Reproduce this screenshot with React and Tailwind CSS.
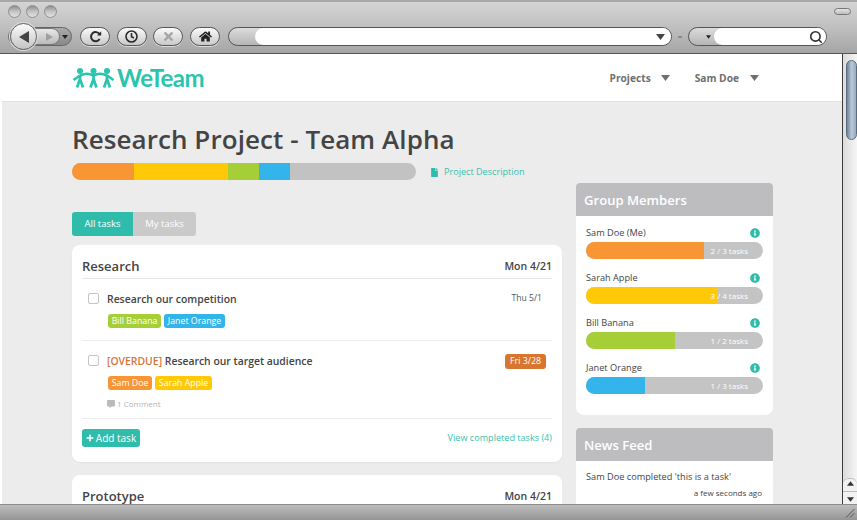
import React from "react";
import { FaHome, FaFile, FaInfoCircle, FaCommentAlt, FaPlus, FaTimes } from "react-icons/fa";
import { Search } from "lucide-react";

const font = { fontFamily: '"Open Sans", sans-serif' };

function Caret({ className }) {
    return (
        <svg width="9" height="6" viewBox="0 0 9 6" className={className}>
            <path d="M0 0h9L4.5 6z" fill="currentColor" />
        </svg>
    );
}

function Light() {
    return <div className="w-[13px] h-[13px] rounded-full border border-[#8f8f8f] bg-gradient-to-b from-[#8e8e92] via-[#c4c4c6] to-[#e2e2e2]" />;
}

function ToolButton({ children }) {
    return (
        <div className="w-[30px] h-[19px] rounded-full border border-[#555] bg-gradient-to-b from-[#fafafa] to-[#c9c9c9] flex items-center justify-center text-[#2b2b2b] shadow-[0_1px_0_#ddd]">
            {children}
        </div>
    );
}

function Toolbar() {
    return (
        <div className="h-[54px] shrink-0 bg-gradient-to-b from-[#d4d4d4] via-[#bfbfbf] to-[#a5a5a5] border-t-2 border-[#a8a8a8] border-b border-b-[#555] relative">
            <div className="flex gap-[5px] pl-[8px] pt-[3px] h-[19px]">
                <Light />
                <Light />
                <Light />
            </div>
            <div className="absolute right-[6px] top-[6px] w-[17px] h-[7px] rounded-full border border-[#777] bg-gradient-to-b from-[#e4e4e4] to-[#bdbdbd]" />
            <div className="flex items-center pl-[8px] pt-[6px]">
                <div className="relative w-[64px] h-[19px] rounded-full border border-[#666] bg-gradient-to-b from-[#aaa] to-[#888] mr-[8px]">
                    <div className="absolute left-[18px] top-0 w-[33px] h-[17px] rounded-full bg-gradient-to-b from-[#e8e8e8] to-[#bbb] border border-[#777] flex items-center justify-end pr-[6px] text-[#a0a0a0]">
                        <svg width="7" height="8" viewBox="0 0 8 9"><path d="M0 0l8 4.5L0 9z" fill="currentColor" /></svg>
                    </div>
                    <div className="absolute left-[1px] top-[-5px] w-[27px] h-[27px] rounded-full border border-[#666] bg-gradient-to-b from-[#fbfbfb] to-[#c4c4c4] shadow-[0_0_0_1px_#ddd] flex items-center justify-center text-[#444]">
                        <svg width="10" height="12" viewBox="0 0 10 12"><path d="M10 0v12L0 6z" fill="currentColor" /></svg>
                    </div>
                    <Caret className="absolute right-[3px] top-[7px] text-[#222] w-[6px] h-[4px]" />
                </div>
                <div className="flex gap-[6.7px] mr-[8px]">
                    <ToolButton>
                        <svg width="13" height="13" viewBox="0 0 13 13" fill="none" stroke="currentColor" strokeWidth="2">
                            <path d="M10.5 4.2A4.6 4.6 0 1 0 10.6 9" />
                            <path d="M12.2 1.2v4.4H8z" fill="currentColor" stroke="none" />
                        </svg>
                    </ToolButton>
                    <ToolButton>
                        <svg width="13" height="13" viewBox="0 0 13 13" fill="none" stroke="currentColor" strokeWidth="1.6">
                            <circle cx="6.5" cy="6.5" r="5.5" />
                            <path d="M6.5 3v3.7l2.4 1.3" />
                        </svg>
                    </ToolButton>
                    <ToolButton>
                        <FaTimes className="text-[#a5a5a5] text-[13px]" />
                    </ToolButton>
                    <ToolButton>
                        <FaHome className="text-[13px] text-[#222]" />
                    </ToolButton>
                </div>
                <div className="w-[444px] h-[19px] rounded-full border border-[#555] bg-gradient-to-b from-[#dcdcdc] to-[#b5b5b5] flex overflow-hidden">
                    <div className="w-[26px] shrink-0" />
                    <div className="flex-1 bg-white rounded-l-full flex items-center justify-end">
                        <Caret className="text-[#444] mr-[6px]" />
                    </div>
                </div>
                <div className="w-[4px] h-[2px] bg-[#8a8a8a] mx-[6px]" />
                <div className="w-[139px] h-[19px] rounded-full border border-[#555] bg-gradient-to-b from-[#dcdcdc] to-[#b5b5b5] flex overflow-hidden">
                    <div className="w-[25px] shrink-0 flex items-center justify-end pr-[3px]">
                        <Caret className="text-[#222] w-[5px] h-[4px]" />
                    </div>
                    <div className="flex-1 bg-white rounded-l-full flex items-center justify-end">
                        <Search size={14} strokeWidth={2.8} className="text-[#333] mr-[3px]" />
                    </div>
                </div>
            </div>
        </div>
    );
}

function Logo() {
    return (
        <div className="flex items-center gap-[2px] text-[#2bc4ad] pt-[1px]">
            <svg width="43" height="20" viewBox="0 0 43 20" fill="none" stroke="currentColor" strokeWidth="2.7">
                {[8, 21.5, 35].map((x) => (
                    <g key={x}>
                        <circle cx={x} cy="3" r="3" fill="currentColor" stroke="none" />
                        <path d={`M${x} 7v5M${x} 11l-3 8.5M${x} 11l3 8.5`} />
                    </g>
                ))}
                <path d="M8 7.5Q15 4 21.5 7.5Q28 4 35 7.5" />
                <path d="M8 7.5L1.5 12M35 7.5l6.5 4.5" />
            </svg>
            <span className="text-[24px] leading-none font-bold tracking-[-0.6px]" style={{ fontFamily: '"Lato", sans-serif' }}>WeTeam</span>
        </div>
    );
}

function Header() {
    return (
        <div className="h-[48px] shrink-0 bg-white border-b border-[#e2e2e2] pl-[70px] pr-[83px] flex items-center justify-between">
            <Logo />
            <div className="flex items-center text-[10.2px] font-bold text-[#6f6f6f] pt-[2px]">
                <span>Projects</span>
                <Caret className="ml-[10px] mr-[25px] text-[#6f6f6f]" />
                <span>Sam Doe</span>
                <Caret className="ml-[11px] text-[#6f6f6f]" />
            </div>
        </div>
    );
}

function Tag({ color, children }) {
    return <span className={`${color} text-white text-[8.8px] leading-[14px] h-[14px] px-[3.7px] rounded-[3px]`}>{children}</span>;
}

function Task({ title, overdue, date, late, tags, comment, last }) {
    return (
        <div className={`relative pl-[25px] ${last ? "h-[78px] pt-[13px]" : "h-[62px] pt-[13px]"} border-b border-[#ececec]`}>
            <div className="absolute left-[6px] top-[14px] w-[11px] h-[11px] rounded-[2px] border border-[#c4c4c4] bg-white" />
            <div className="flex justify-between items-start">
                <div className="text-[10.4px] leading-[15px] font-semibold text-[#444]">
                    {overdue && <span className="text-[#d8743a]">[OVERDUE] </span>}
                    {title}
                </div>
                {late ? (
                    <span className="bg-[#d8762f] text-white text-[8.8px] leading-[15px] h-[15px] px-[5px] rounded-[3px] mr-[6px]">{date}</span>
                ) : (
                    <span className="text-[8.6px] leading-[13px] text-[#555] mr-[10px]">{date}</span>
                )}
            </div>
            <div className="flex gap-[3px] mt-[7px] pl-[1px]">
                {tags.map((t) => (
                    <Tag key={t.name} color={t.color}>{t.name}</Tag>
                ))}
            </div>
            {comment && (
                <div className="flex items-center gap-[2px] mt-[8px] text-[8px] leading-[12px] text-[#b5b5b5]">
                    <FaCommentAlt className="text-[8px] text-[#bbb]" />
                    <span>{comment}</span>
                </div>
            )}
        </div>
    );
}

function Card() {
    return (
        <div className="bg-white rounded-[8px] px-[10px] pt-[11px] h-[217px] shadow-[0_1px_1px_#e2e2e2]">
            <div className="flex justify-between items-center h-[23px] border-b border-[#e6e6e6] pb-[1px]">
                <span className="text-[13px] font-semibold text-[#444]">Research</span>
                <span className="text-[10.5px] font-semibold text-[#444]">Mon 4/21</span>
            </div>
            <Task
                title="Research our competition"
                date="Thu 5/1"
                tags={[
                    { name: "Bill Banana", color: "bg-[#a6cf37]" },
                    { name: "Janet Orange", color: "bg-[#33b4ea]" },
                ]}
            />
            <Task
                overdue
                last
                late
                title="Research our target audience"
                date="Fri 3/28"
                tags={[
                    { name: "Sam Doe", color: "bg-[#f89636]" },
                    { name: "Sarah Apple", color: "bg-[#ffc907]" },
                ]}
                comment="1 Comment"
            />
            <div className="flex justify-between items-center mt-[10px]">
                <div className="h-[18px] w-[58px] bg-[#2fbcab] rounded-[3px] text-white text-[10px] font-medium flex items-center justify-center gap-[2px]">
                    <FaPlus className="text-[8px]" />
                    <span>Add task</span>
                </div>
                <span className="text-[9.1px] text-[#3ac0ae]">View completed tasks (4)</span>
            </div>
        </div>
    );
}

function Member({ name, width, color, label }) {
    return (
        <div className="h-[45px]">
            <div className="flex justify-between items-center h-[16px] pr-[3px]">
                <span className="text-[9.2px] text-[#444]">{name}</span>
                <FaInfoCircle className="text-[10px] text-[#2fbcab]" />
            </div>
            <div className="relative h-[17px] mt-[1px] rounded-full bg-[#c4c4c4] overflow-hidden">
                <div className={`h-full ${color}`} style={{ width }} />
                <span className="absolute right-[15px] top-0 text-[8px] leading-[17px] text-white">{label}</span>
            </div>
        </div>
    );
}

function Sidebar() {
    return (
        <div className="w-[197px] shrink-0 pt-[81px] flex flex-col gap-[13px]">
            <div className="shrink-0 overflow-hidden bg-white h-[232px] rounded-t-[4px] rounded-b-[8px]">
                <div className="h-[33px] bg-[#bdbdbf] px-[8px] pt-[2px] flex items-center text-white text-[13.1px] font-semibold">Group Members</div>
                <div className="px-[10px] pt-[9px]">
                    <Member name="Sam Doe (Me)" width="118px" color="bg-[#f89636]" label="2 / 3 tasks" />
                    <Member name="Sarah Apple" width="132px" color="bg-[#ffc907]" label="3 / 4 tasks" />
                    <Member name="Bill Banana" width="89px" color="bg-[#a6cf37]" label="1 / 2 tasks" />
                    <Member name="Janet Orange" width="59px" color="bg-[#33b4ea]" label="1 / 3 tasks" />
                </div>
            </div>
            <div className="shrink-0 rounded-t-[4px] overflow-hidden bg-white">
                <div className="h-[33px] bg-[#bdbdbf] px-[8px] pt-[2px] flex items-center text-white text-[13.1px] font-semibold">News Feed</div>
                <div className="px-[10px] pt-[8px] pb-[20px]">
                    <div className="text-[9.2px] leading-[16px] text-[#444]">Sam Doe completed 'this is a task'</div>
                    <div className="text-[8px] leading-[14px] mt-[1px] text-[#444] text-right pr-[1px]">a few seconds ago</div>
                </div>
            </div>
        </div>
    );
}

function Main() {
    return (
        <div className="flex-1 min-h-0 overflow-hidden bg-[#ececec] pl-[70px] pr-[69px] flex gap-[14px]">
            <div className="w-[490px] shrink-0">
                <h1 className="text-[26px] leading-[36px] font-semibold text-[#444] mt-[19px] tracking-[0.07px]">Research Project - Team Alpha</h1>
                <div className="flex items-center mt-[6px]">
                    <div className="w-[344px] h-[17px] rounded-full bg-[#c2c2c2] overflow-hidden flex">
                        <div className="w-[62px] bg-[#f89636]" />
                        <div className="w-[94px] bg-[#ffc907]" />
                        <div className="w-[31px] bg-[#a6cf37]" />
                        <div className="w-[31px] bg-[#33b4ea]" />
                    </div>
                    <FaFile className="text-[9px] text-[#2fbcab] ml-[14px] mt-[1px]" />
                    <span className="text-[9.1px] text-[#3ac0ae] ml-[5px] pt-[1px]">Project Description</span>
                </div>
                <div className="flex mt-[32px] w-[124px] h-[24px] text-[9.5px] text-white">
                    <div className="w-[61px] bg-[#2fbcab] rounded-l-[3px] flex items-center justify-center">All tasks</div>
                    <div className="w-[63px] bg-[#cacaca] rounded-r-[3px] flex items-center justify-center">My tasks</div>
                </div>
                <div className="mt-[9px] flex flex-col gap-[13px]">
                    <Card />
                    <div className="bg-white rounded-[8px] px-[10px] pt-[10px] h-[60px]">
                        <div className="flex justify-between items-center h-[23px]">
                            <span className="text-[13px] font-semibold text-[#444]">Prototype</span>
                            <span className="text-[10.5px] font-semibold text-[#444]">Mon 4/21</span>
                        </div>
                    </div>
                </div>
            </div>
            <Sidebar />
        </div>
    );
}

function Scrollbar() {
    return (
        <div className="w-[15px] shrink-0 border-l border-[#3d3d3d] bg-gradient-to-r from-[#dcdcdc] to-[#f5f5f5] pt-[6px] pl-[3px] flex flex-col">
            <div className="w-[11px] h-[80px] rounded-full bg-gradient-to-r from-[#6f8299] via-[#b9c7d8] to-[#9aabbf] border border-[#5b6b80]" />
            <div className="flex-1" />
            <div className="h-[26px] -ml-[3px] border-t border-[#bbb] flex flex-col items-center justify-around text-[#333] bg-[#f2f2f2] rounded-t-[6px]">
                <Caret className="rotate-180 w-[7px] h-[5px]" />
                <div className="w-full h-px bg-[#bbb]" />
                <Caret className="w-[7px] h-[5px]" />
            </div>
        </div>
    );
}

function StatusBar() {
    return (
        <div className="h-[16px] shrink-0 border-t border-[#8c8c8c] bg-gradient-to-b from-[#bdbdbd] to-[#959595] flex justify-end items-center pr-[2px]">
            <svg width="10" height="10" viewBox="0 0 10 10" stroke="#555" strokeWidth="1">
                <path d="M1 9.5L9.5 1M5 9.5L9.5 5" />
            </svg>
        </div>
    );
}

export default function App() {
    return (
        <div className="w-[857px] h-[520px] flex flex-col overflow-hidden" style={font}>
            <Toolbar />
            <div className="flex-1 min-h-0 flex pl-[2px] bg-white">
                <div className="flex-1 min-w-0 flex flex-col">
                    <Header />
                    <Main />
                </div>
                <Scrollbar />
            </div>
            <StatusBar />
        </div>
    );
}
